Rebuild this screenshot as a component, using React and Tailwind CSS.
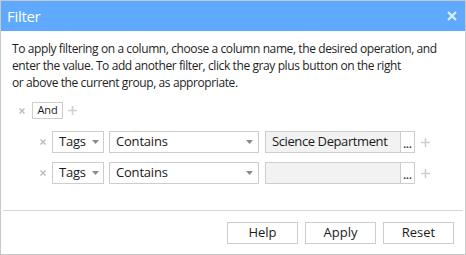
import React from "react";

const font = { fontFamily: '"Open Sans", "Noto Sans", sans-serif' };

const SmallX = () => (
  <svg width="6" height="6" viewBox="0 0 6 6" className="shrink-0">
    <path d="M0.5 0.5 L5.5 5.5 M5.5 0.5 L0.5 5.5" stroke="#b9b9b9" strokeWidth="1.4" />
  </svg>
);

const Plus = () => (
  <svg width="9" height="9" viewBox="0 0 9 9" className="shrink-0">
    <path d="M4.5 0 V9 M0 4.5 H9" stroke="#cfcfcf" strokeWidth="1.6" />
  </svg>
);

const Caret = () => (
  <svg width="7" height="4" viewBox="0 0 7 4" className="shrink-0">
    <path d="M0 0 H7 L3.5 4 Z" fill="#8a8a8a" />
  </svg>
);

const ConditionRow = ({ value }) => (
  <div className="flex items-center h-[22px]">
    <div className="w-[19px] flex justify-end pr-[6px]">
      <SmallX />
    </div>
    {/* column select */}
    <div className="w-[52px] h-full border border-[#cdcdcd] bg-white flex items-center justify-between pl-[6px] pr-[4px] text-[13px] text-[#1a1a1a] tracking-[-0.2px]">
      <span>Tags</span>
      <Caret />
    </div>
    {/* operation select */}
    <div className="ml-[5px] w-[150px] h-full border border-[#cdcdcd] bg-white flex items-center justify-between pl-[6px] pr-[5px] text-[13px] text-[#1a1a1a] tracking-[-0.2px]">
      <span>Contains</span>
      <Caret />
    </div>
    {/* value editor */}
    <div className="ml-[6px] w-[136px] h-full border border-[#cdcdcd] bg-[#f2f2f2] flex items-center pl-[6px] text-[13px] text-[#1a1a1a] tracking-[-0.4px] whitespace-nowrap overflow-hidden">
      {value}
    </div>
    <div className="w-[14px] h-full border border-l-0 border-[#cdcdcd] bg-white flex items-end justify-center pb-[3px] text-[10px] leading-none text-[#333] font-bold">
      ...
    </div>
    <div className="ml-[6px]">
      <Plus />
    </div>
  </div>
);

const Button = ({ children }) => (
  <button className="w-[71px] h-[22px] border border-[#cdcdcd] bg-white text-[13px] text-[#1a1a1a] flex items-center justify-center">
    {children}
  </button>
);

export default function App() {
  return (
    <div className="w-[466px] h-[255px] border border-[#c8c8c8] bg-white flex flex-col" style={font}>
      {/* Title bar */}
      <div className="h-[30px] bg-[#5fa9ff] flex items-center justify-between pl-[6px] pr-[8px]">
        <span className="text-white text-[15px] tracking-[-0.3px]">Filter</span>
        <svg width="10" height="10" viewBox="0 0 10 10">
          <path d="M1 1 L9 9 M9 1 L1 9" stroke="#e4f0ff" strokeWidth="2" />
        </svg>
      </div>

      {/* Description */}
      <div className="pl-[11px] pr-[4px] pt-[9px] text-[12px] leading-[17px] text-[#1e1e1e] tracking-[-0.4px] whitespace-nowrap">
        <p>To apply filtering on a column, choose a column name, the desired operation, and</p>
        <p>enter the value. To add another filter, click the gray plus button on the right</p>
        <p>or above the current group, as appropriate.</p>
      </div>

      {/* Filter tree */}
      <div className="mt-[11px] pl-[18px]">
        <div className="flex items-center h-[17px]">
          <div className="w-[13px]">
            <SmallX />
          </div>
          <div className="w-[31px] h-full border border-[#cdcdcd] bg-white flex items-center justify-center text-[11px] text-[#1a1a1a] tracking-[-0.2px]">
            And
          </div>
          <div className="ml-[5px]">
            <Plus />
          </div>
        </div>
        <div className="mt-[12px] pl-[14px] flex flex-col gap-[9px]">
          <ConditionRow value="Science Department" />
          <ConditionRow value="" />
        </div>
      </div>

      {/* Footer */}
      <div className="mt-auto mx-[2px] border-t border-[#d6d6d6] flex justify-end gap-[7px] pt-[11px] pb-[10px] pr-[9px]">
        <Button>Help</Button>
        <Button>Apply</Button>
        <Button>Reset</Button>
      </div>
    </div>
  );
}
